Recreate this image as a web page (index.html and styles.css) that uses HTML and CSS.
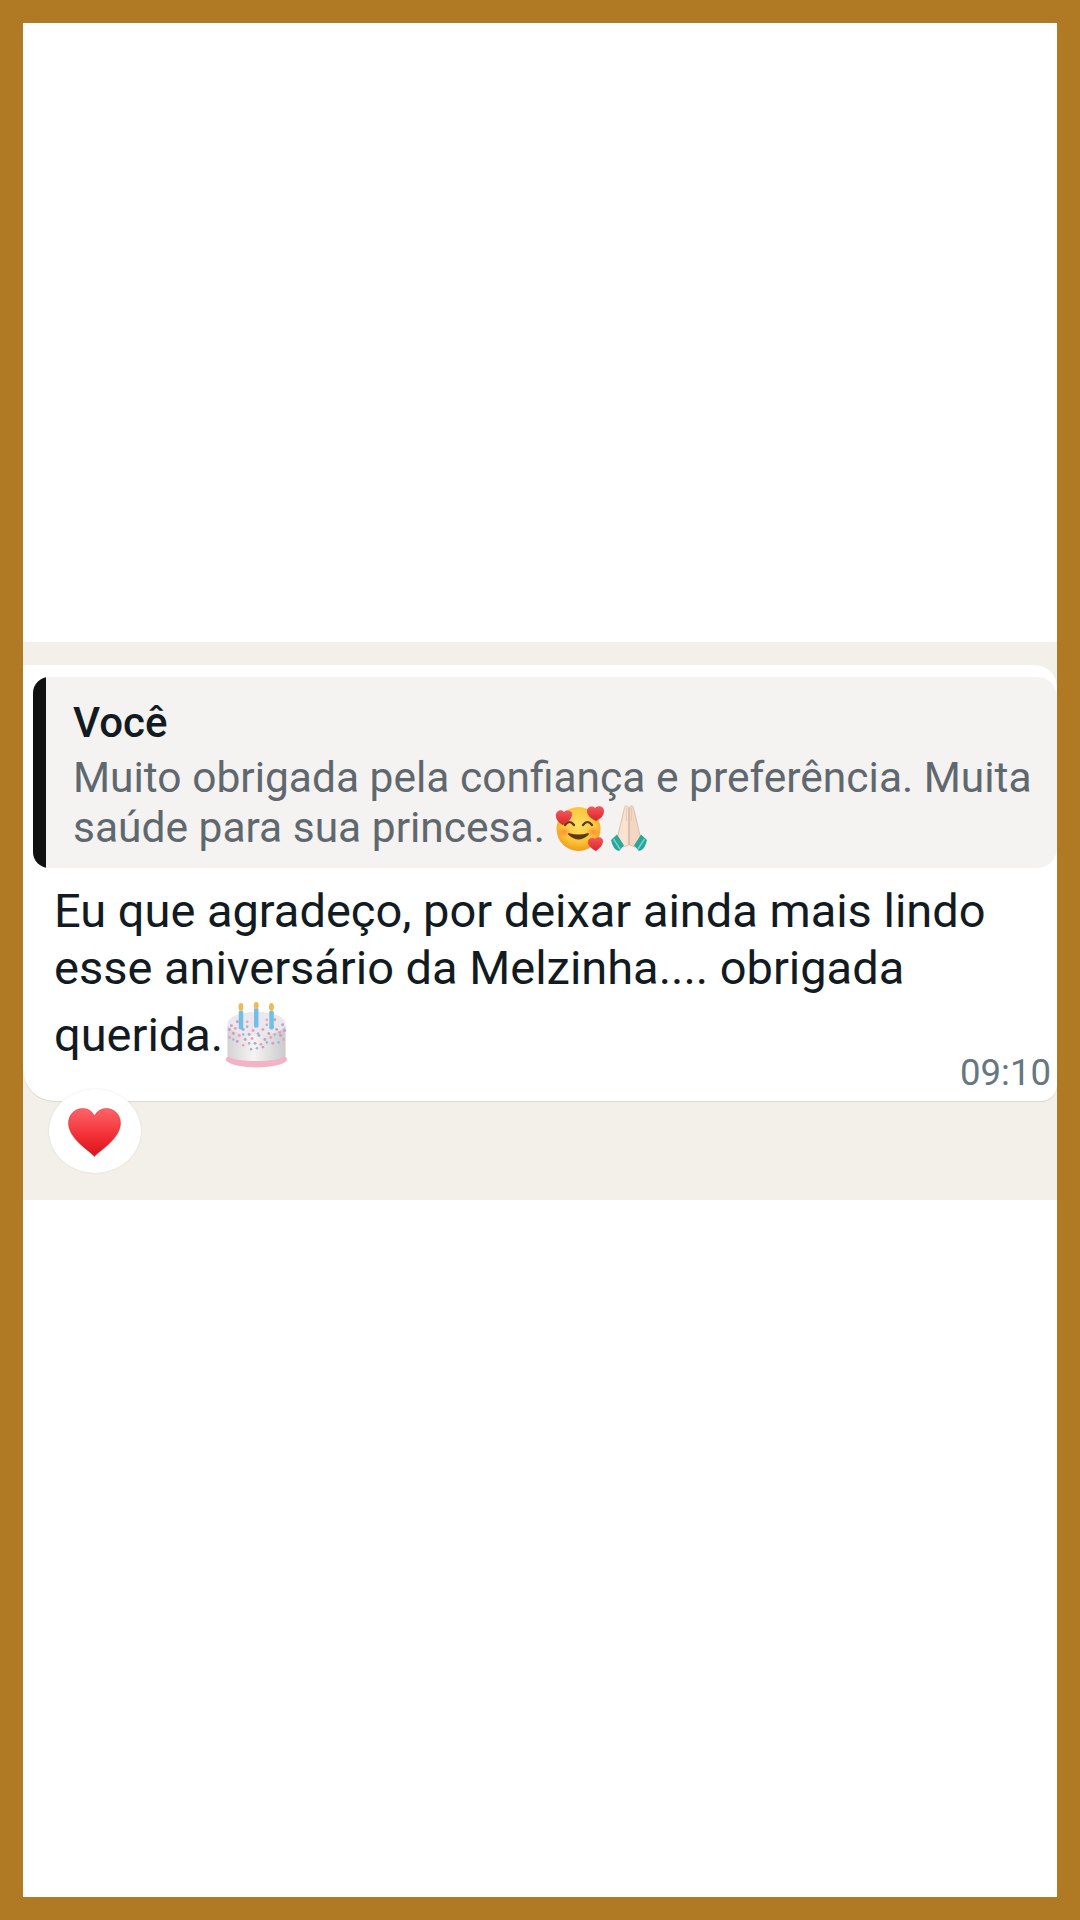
FILE: index.html
```html
<!DOCTYPE html>
<html lang="pt">
<head>
<meta charset="utf-8">
<title>Mensagem</title>
<link rel="stylesheet" href="styles.css">
</head>
<body>
<main class="frame">
  <section class="band">
    <article class="bubble">
      <div class="quote">
        <div class="quote-bar"></div>
        <div class="quote-body">
          <div class="quote-author">Você</div>
          <div class="quote-text">Muito obrigada pela confiança e preferência. Muita saúde para sua princesa.<svg class="emoji-face" viewBox="0 0 49 46" aria-hidden="true">
              <defs>
                <radialGradient id="fg" cx="50%" cy="40%" r="62%"><stop offset="0" stop-color="#ffe066"/><stop offset=".65" stop-color="#fcc436"/><stop offset="1" stop-color="#ee951c"/></radialGradient>
                <radialGradient id="ch" cx="50%" cy="50%" r="50%"><stop offset="0" stop-color="#ff7f45" stop-opacity=".8"/><stop offset="1" stop-color="#ff7f45" stop-opacity="0"/></radialGradient>
                <linearGradient id="hr" x1="0" x2="0" y1="0" y2="1"><stop offset="0" stop-color="#f4575a"/><stop offset="1" stop-color="#d9252c"/></linearGradient>
              </defs>
              <circle cx="23.500" cy="24" r="22" fill="url(#fg)"/>
              <ellipse cx="9" cy="27" rx="7" ry="5" fill="url(#ch)"/>
              <ellipse cx="38" cy="27" rx="7" ry="5" fill="url(#ch)"/>
              <path d="M10 20q4.500-6 9 0M28 20q4.500-6 9 0" fill="none" stroke="#5a3a12" stroke-width="2.200" stroke-linecap="round"/>
              <path d="M14 29q9.500 9 19 0q-9.500 3-19 0z" fill="#5a3a12" stroke="#5a3a12" stroke-width="1.800" stroke-linejoin="round"/>
              <path d="M8 20c-4-2-8-6-7-11c1-4 6-5 8-2c3-3 9-1 8 3c-1 5-5 8-9 10z" fill="url(#hr)"/>
              <path d="M41 16c-4-2-9-5-9-10c0-4 5-6 8-3c3-3 9-2 9 3c0 5-4 8-8 10z" fill="url(#hr)"/>
              <path d="M41 46c-4-2-8-5-8-9c0-4 5-5 7-3c3-3 8-2 8 2c0 4-3 7-7 10z" fill="url(#hr)"/>
            </svg><svg class="emoji-hands" viewBox="0 0 38 46" aria-hidden="true">
              <path d="M18.500 3C17.500 0 15 0 14.500 3L9.500 24L7.500 32L13 42L18.500 40Z" fill="#f8e2d1" stroke="#d8b49d" stroke-width=".8"/>
              <path d="M19.500 3C20.500 0 23 0 23.500 3L28.500 24L30.500 32L25 42L19.500 40Z" fill="#f3d7c3" stroke="#d8b49d" stroke-width=".8"/>
              <path d="M16.500 3v13M21.500 3v13" stroke="#e2c2ad" stroke-width=".8"/>
              <path d="M1 35L7 29.500L14 40.500L9 46Q3 45 1 35Z" fill="#2aa69a"/>
              <path d="M37 35L31 29.500L24 40.500L29 46Q35 45 37 35Z" fill="#2aa69a"/>
              <path d="M3.500 34l6.500 10M34.500 34l-6.500 10" stroke="#78d2c7" stroke-width="1.500"/>
            </svg></div>
        </div>
      </div>
      <div class="message">Eu que agradeço, por deixar ainda mais lindo esse aniversário da Melzinha.... obrigada querida.<svg class="emoji-cake" viewBox="0 0 63 67" aria-hidden="true">
          <defs>
            <linearGradient id="side" x1="0" x2="1" y1="0" y2="0"><stop offset="0" stop-color="#d4d2d4"/><stop offset=".45" stop-color="#f5f4f4"/><stop offset="1" stop-color="#cbc9cd"/></linearGradient>
          </defs>
          <ellipse cx="31.500" cy="58" rx="31" ry="8.500" fill="#f2b3c4"/>
          <path d="M2 24v30c4 8 55 8 59 0V24z" fill="url(#side)"/>
          <ellipse cx="31.500" cy="22" rx="29.500" ry="12" fill="#ebe7ec"/>
          <g fill="#c39fc9">
            <circle cx="6" cy="24" r="1.500"/><circle cx="12" cy="20" r="1.500"/><circle cx="18" cy="28" r="1.500"/><circle cx="24" cy="33" r="1.500"/><circle cx="34" cy="34" r="1.500"/><circle cx="44" cy="32" r="1.500"/><circle cx="52" cy="28" r="1.500"/><circle cx="58" cy="23" r="1.500"/><circle cx="50" cy="18" r="1.500"/><circle cx="8" cy="32" r="1.500"/><circle cx="20" cy="38" r="1.500"/><circle cx="40" cy="38" r="1.500"/><circle cx="56" cy="34" r="1.500"/><circle cx="30" cy="42" r="1.500"/><circle cx="48" cy="42" r="1.500"/><circle cx="12" cy="40" r="1.500"/><circle cx="4" cy="28" r="1.500"/><circle cx="60" cy="29" r="1.500"/><circle cx="38" cy="46" r="1.300"/><circle cx="26" cy="48" r="1.300"/>
          </g>
          <g fill="#ee9fb6">
            <circle cx="10" cy="27" r="1.500"/><circle cx="16" cy="23" r="1.500"/><circle cx="28" cy="29" r="1.500"/><circle cx="38" cy="28" r="1.500"/><circle cx="48" cy="25" r="1.500"/><circle cx="55" cy="31" r="1.500"/><circle cx="14" cy="34" r="1.500"/><circle cx="27" cy="37" r="1.500"/><circle cx="46" cy="36" r="1.500"/><circle cx="4" cy="36" r="1.500"/><circle cx="59" cy="38" r="1.500"/><circle cx="36" cy="43" r="1.500"/><circle cx="22" cy="20" r="1.300"/><circle cx="42" cy="18" r="1.300"/><circle cx="18" cy="44" r="1.300"/>
          </g>
          <g fill="#96bcd9">
            <circle cx="22" cy="25" r="1.300"/><circle cx="33" cy="32" r="1.300"/><circle cx="42" cy="23" r="1.300"/><circle cx="18" cy="33" r="1.300"/><circle cx="50" cy="33" r="1.300"/><circle cx="8" cy="38" r="1.300"/><circle cx="24" cy="42" r="1.300"/><circle cx="42" cy="41" r="1.300"/><circle cx="54" cy="41" r="1.300"/><circle cx="32" cy="47" r="1.300"/>
          </g>
          <g fill="#6fbfe6">
            <rect x="13.500" y="9" width="4.500" height="19" rx="1.500"/>
            <rect x="29" y="6" width="4.500" height="20" rx="1.500"/>
            <rect x="44.500" y="9" width="4.500" height="19" rx="1.500"/>
          </g>
          <g fill="#edbb54">
            <ellipse cx="15.700" cy="5" rx="2.500" ry="4"/>
            <ellipse cx="31.200" cy="3.500" rx="2.500" ry="3.500"/>
            <ellipse cx="46.700" cy="5" rx="2.500" ry="4"/>
          </g>
        </svg></div>
      <div class="time">09:10</div>
    </article>
    <div class="reaction">
      <svg class="emoji-heart" viewBox="0 0 52 48" preserveAspectRatio="none" aria-hidden="true">
        <defs><linearGradient id="hg" x1="0" x2="0" y1="0" y2="1"><stop offset="0" stop-color="#ff6468"/><stop offset=".6" stop-color="#f02d33"/><stop offset="1" stop-color="#d8141c"/></linearGradient></defs>
        <path d="M26 47.500C21 42 .5 30 .5 15C.5 6 7 .5 14.500 .5C20 .5 24 3.500 26 8C28 3.500 32 .5 37.500 .5C45 .5 51.500 6 51.500 15C51.500 30 31 42 26 47.500Z" fill="url(#hg)" stroke="#b51d24" stroke-opacity=".5" stroke-width=".8"/>
      </svg>
    </div>
  </section>
</main>
</body>
</html>
```

FILE: styles.css
```css
* { box-sizing: border-box; }

html, body {
  margin: 0;
  padding: 0;
}

body {
  width: 1080px;
  height: 1920px;
  overflow: hidden;
  background: #fff;
  font-family: Roboto, "Liberation Sans", sans-serif;
}

.frame {
  width: 1080px;
  height: 1920px;
  border: 23px solid #b07a24;
  background: #fff;
  padding-top: 619px;
}

.band {
  height: 558px;
  padding-top: 23px;
  background: #f3f0e9;
}

.bubble {
  display: flex;
  flex-direction: column;
  height: 436px;
  padding: 12px 0 0 10px;
  background: #fff;
  border-radius: 0 22px 16px 32px;
  box-shadow: 0 1px 1px rgba(0, 0, 0, .1);
}

.quote {
  display: flex;
  flex: none;
  height: 191px;
  border-radius: 16px 20px 20px 16px;
  background: #f4f3f1;
  overflow: hidden;
}

.quote-bar {
  width: 13px;
  flex: none;
  background: #111;
}

.quote-body {
  padding: 21px 8px 0 27px;
}

.quote-author {
  font-size: 42px;
  line-height: 50px;
  font-weight: 500;
  color: #111b21;
}

.quote-text {
  margin-top: 5px;
  font-size: 42.5px;
  line-height: 50px;
  color: #5f686e;
}

.emoji-face {
  width: 49px;
  height: 46px;
  margin-left: 10px;
  vertical-align: -9px;
  filter: blur(.4px);
}

.emoji-hands {
  width: 38px;
  height: 46px;
  margin-left: 6px;
  vertical-align: -9px;
  filter: blur(.4px);
}

.message {
  padding: 14px 10px 0 21px;
  font-size: 47px;
  line-height: 57px;
  letter-spacing: -.02px;
  color: #111b21;
}

.emoji-cake {
  width: 63px;
  height: 66px;
  margin: 6px 0 0 2px;
  vertical-align: -17px;
  filter: blur(.7px);
}

.time {
  align-self: flex-end;
  margin-top: -15px;
  padding-right: 6px;
  font-size: 36.5px;
  line-height: 40px;
  color: #667781;
}

.reaction {
  display: flex;
  align-items: center;
  justify-content: center;
  width: 92px;
  height: 84px;
  margin: -12px 0 0 26px;
  padding: 3px 1px 0 0;
  position: relative;
  border-radius: 50%;
  background: #fff;
  box-shadow: 0 0 2px rgba(0, 0, 0, .12);
}

.emoji-heart {
  width: 53px;
  height: 49px;
}
```
